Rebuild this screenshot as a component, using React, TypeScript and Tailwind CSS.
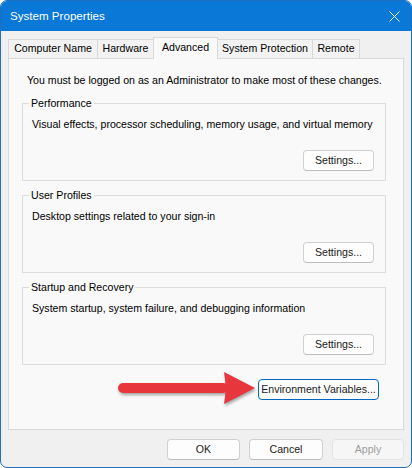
import React from 'react'

const TABS = [
  { label: 'Computer Name', w: 'w-[90px]' },
  { label: 'Hardware', w: 'w-[57px]' },
  { label: 'Advanced', w: 'w-[65px]', active: true },
  { label: 'System Protection', w: 'w-[96px]' },
  { label: 'Remote', w: 'w-[48px]' },
]

const GROUPS = [
  { title: 'Performance', desc: 'Visual effects, processor scheduling, memory usage, and virtual memory', mt: 'mt-[7px]' },
  { title: 'User Profiles', desc: 'Desktop settings related to your sign-in', mt: 'mt-[6px]' },
  { title: 'Startup and Recovery', desc: 'System startup, system failure, and debugging information', mt: 'mt-[6px]' },
]

function WinButton({ children, className = '', disabled = false }: { children: React.ReactNode; className?: string; disabled?: boolean }) {
  return (
    <button
      disabled={disabled}
      className={`h-[21px] rounded-[4px] border text-[10.6px] leading-none ${
        disabled
          ? 'border-[#e3e3e3] bg-[#f6f6f6] text-[#9d9d9d]'
          : 'border-[#d0d0d0] border-b-[#bdbdbd] bg-[#fdfdfd] text-[#1a1a1a]'
      } ${className}`}
    >
      {children}
    </button>
  )
}

export default function App() {
  return (
    <div className="relative w-[412px] h-[468px] bg-white font-['Liberation_Sans',Arial,sans-serif]">
      <div className="flex flex-col h-full rounded-[7px] border border-[#1f6fbf] bg-[#f0f0f0] overflow-hidden">
        {/* Title bar */}
        <div className="flex items-center justify-between h-[30px] bg-[#0a78d6] pl-[9px] pr-[10px] shrink-0">
          <span className="text-white text-[11.6px]">System Properties</span>
          <svg width="11" height="11" viewBox="0 0 11 11" className="mr-[1px]">
            <path d="M0.5 0.5 L10.5 10.5 M10.5 0.5 L0.5 10.5" stroke="white" strokeWidth="1" />
          </svg>
        </div>

        <div className="px-[7px] pt-[6px] text-[10.6px] text-black">
          {/* Tabs */}
          <div className="flex items-end">
            {TABS.map((t, i) => (
              <div
                key={t.label}
                className={`${t.w} ${i > 0 ? '-ml-px' : ''} flex items-center justify-center border border-b-0 border-[#d9d9d9] ${
                  t.active ? 'relative z-10 h-[22px] -mb-px bg-[#f9f9f9] pb-[2px]' : 'h-[19px] bg-[#f2f2f2]'
                }`}
              >
                {t.label}
              </div>
            ))}
          </div>

          {/* Tab panel */}
          <div className="h-[372px] border border-[#d9d9d9] bg-[#f9f9f9] px-[13px] pt-[13px]">
            <p className="pl-[5px] leading-[16px]">You must be logged on as an Administrator to make most of these changes.</p>

            {GROUPS.map(g => (
              <fieldset key={g.title} className={`${g.mt} w-[364px] h-[86px] border border-[#dcdcdc] pl-[9px] pr-[11px]`}>
                <legend className="-ml-[3px] px-[2px] leading-[16px]">{g.title}</legend>
                <p className="mt-[5px] leading-[16px]">{g.desc}</p>
                <div className="flex justify-end mt-[18px]">
                  <WinButton className="w-[71px]">Settings...</WinButton>
                </div>
              </fieldset>
            ))}

            <div className="flex justify-end pr-[11px] mt-[14px]">
              <WinButton className="w-[121px] !border-[#0067c0] border-b-[#0067c0]">Environment Variables...</WinButton>
            </div>
          </div>

          {/* Dialog buttons */}
          <div className="flex justify-end gap-[9px] mt-[9px]">
            <WinButton className="w-[73px]">OK</WinButton>
            <WinButton className="w-[74px]">Cancel</WinButton>
            <WinButton className="w-[72px]" disabled>Apply</WinButton>
          </div>
        </div>
      </div>

      {/* Red annotation arrow */}
      <svg
        width="150"
        height="42"
        viewBox="0 0 150 42"
        className="absolute left-[110px] top-[368px] drop-shadow-[1px_2px_1.5px_rgba(0,0,0,0.35)]"
      >
        <rect x="8" y="15" width="110" height="10" rx="5" fill="#e8363d" />
        <path d="M114 4 L145 20 L114 36 Q117 20 114 4 Z" fill="#e8363d" />
      </svg>
    </div>
  )
}
